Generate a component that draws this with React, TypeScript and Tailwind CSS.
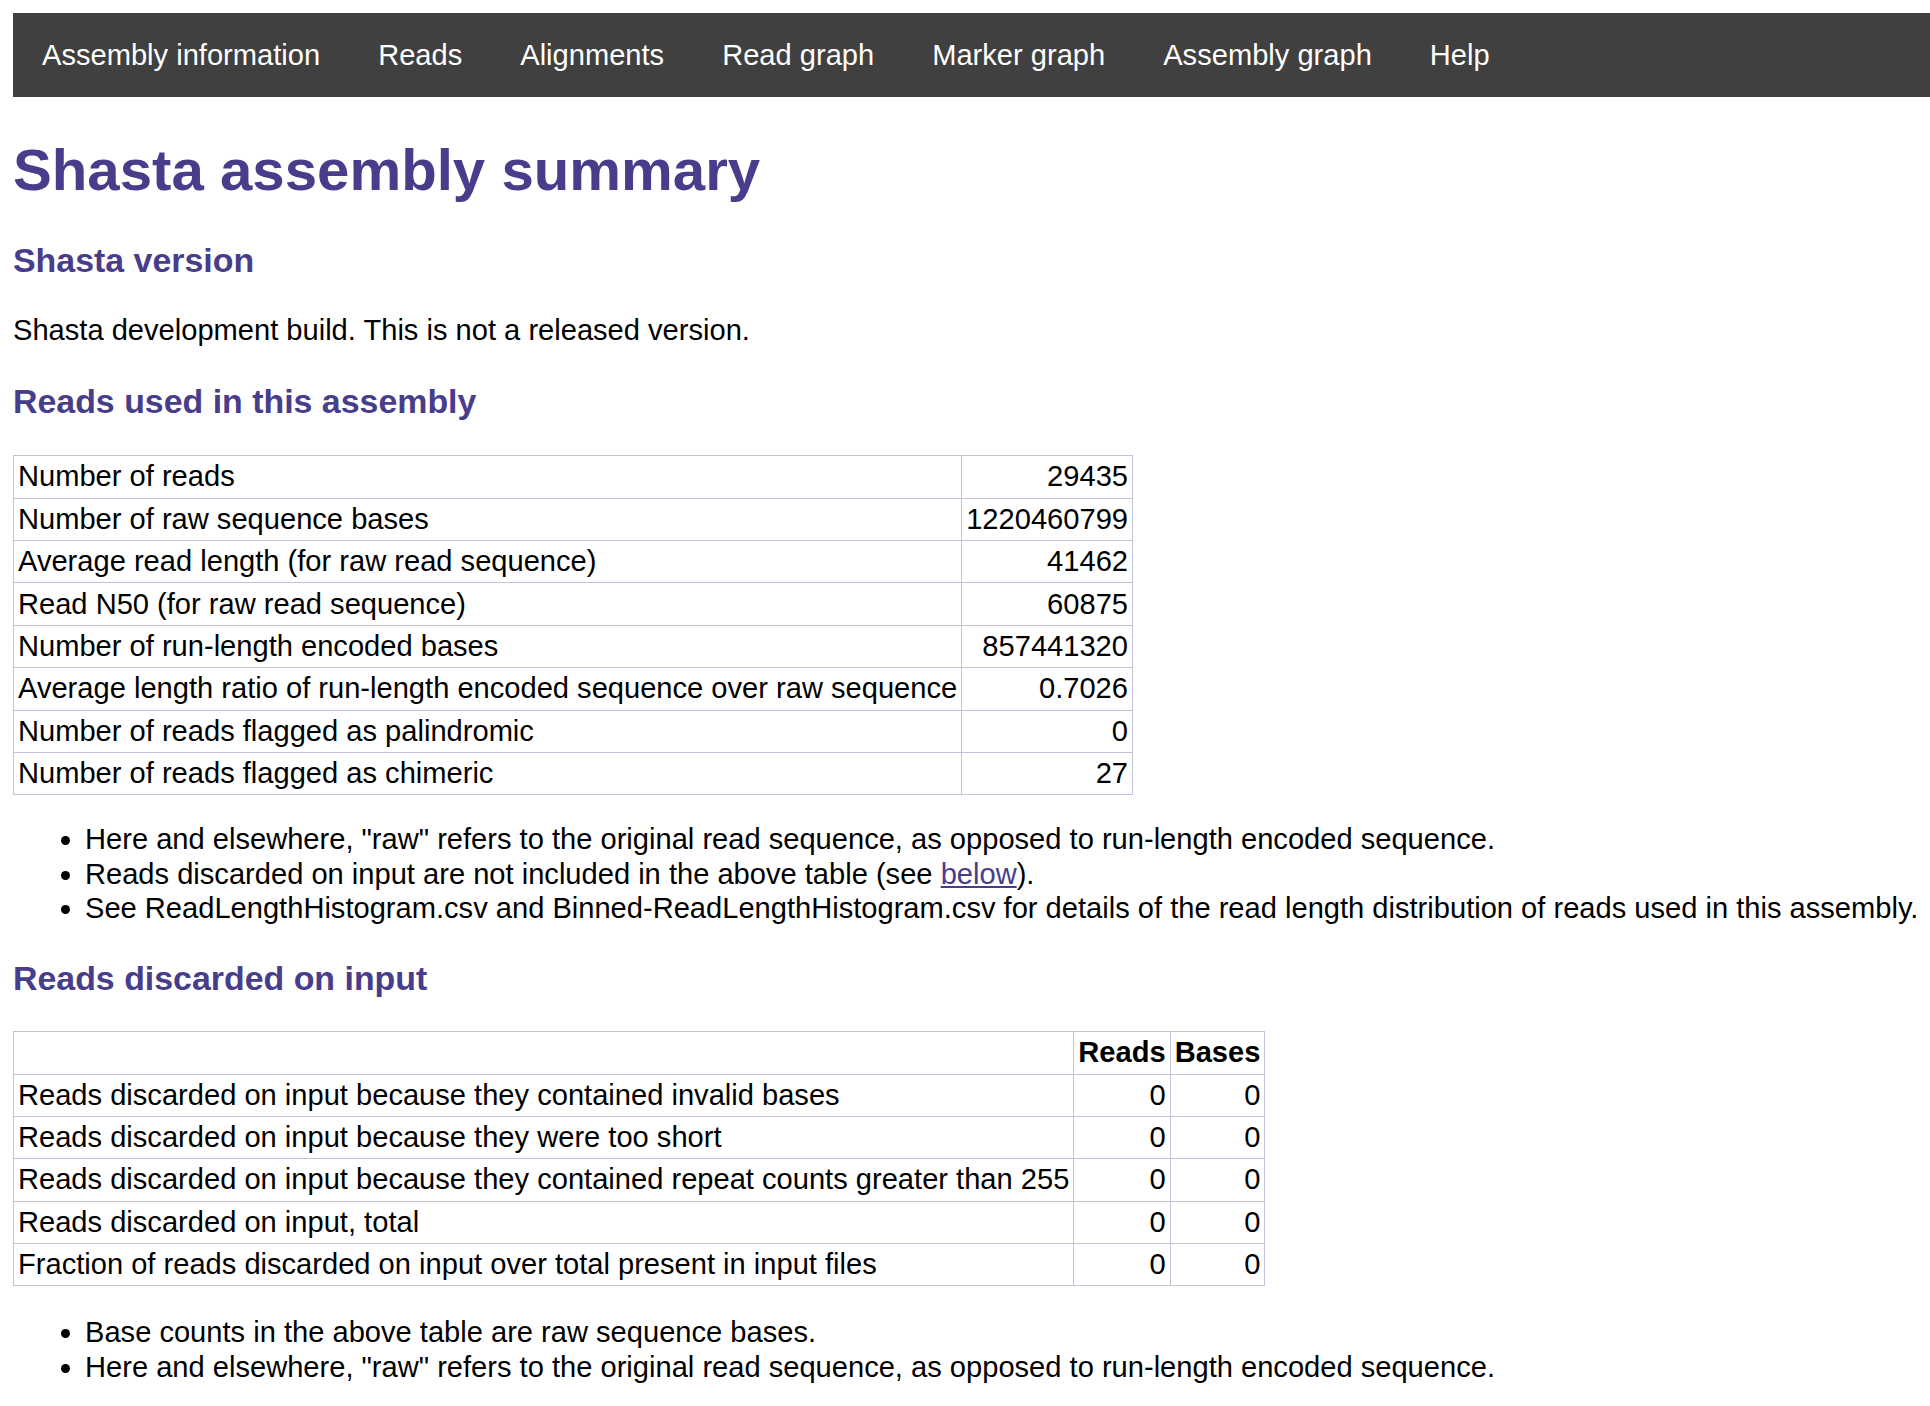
import React from "react";

const navItems = [
  "Assembly information",
  "Reads",
  "Alignments",
  "Read graph",
  "Marker graph",
  "Assembly graph",
  "Help",
];

const readsUsed: [string, string][] = [
  ["Number of reads", "29435"],
  ["Number of raw sequence bases", "1220460799"],
  ["Average read length (for raw read sequence)", "41462"],
  ["Read N50 (for raw read sequence)", "60875"],
  ["Number of run-length encoded bases", "857441320"],
  ["Average length ratio of run-length encoded sequence over raw sequence", "0.7026"],
  ["Number of reads flagged as palindromic", "0"],
  ["Number of reads flagged as chimeric", "27"],
];

const discarded: [string, string, string][] = [
  ["Reads discarded on input because they contained invalid bases", "0", "0"],
  ["Reads discarded on input because they were too short", "0", "0"],
  ["Reads discarded on input because they contained repeat counts greater than 255", "0", "0"],
  ["Reads discarded on input, total", "0", "0"],
  ["Fraction of reads discarded on input over total present in input files", "0", "0"],
];

const cell = "border border-[#c4c2d6] px-[4px] py-[4.2px] leading-[33px]";

function App() {
  return (
    <div className="min-h-screen bg-white pl-[13px] pt-[13px] pb-10 text-black text-[29.1px] font-['Liberation_Sans',Arial,sans-serif]">
      {/* top navigation */}
      <nav className="flex items-center h-[84px] bg-[#404040]">
        {navItems.map((item) => (
          <a key={item} className="px-[29px] leading-[33px] text-white whitespace-nowrap cursor-pointer">
            {item}
          </a>
        ))}
      </nav>

      <h1 className="mt-[38.6px] mb-[38.4px] text-[58.2px] leading-[67px] font-bold text-[#483d8b]">
        Shasta assembly summary
      </h1>

      <h3 className="text-[33.9px] leading-[39px] font-bold text-[#483d8b]">Shasta version</h3>
      <p className="mt-[34.4px] leading-[33px]">
        Shasta development build. This is not a released version.
      </p>

      {/* reads used */}
      <h3 className="mt-[34.6px] text-[33.9px] leading-[39px] font-bold text-[#483d8b]">
        Reads used in this assembly
      </h3>
      <table className="mt-[34.3px]">
        <tbody>
          {readsUsed.map(([label, value]) => (
            <tr key={label}>
              <td className={cell + " whitespace-nowrap"}>{label}</td>
              <td className={cell + " text-right"}>{value}</td>
            </tr>
          ))}
        </tbody>
      </table>
      <ul className="mt-[27.1px] list-disc pl-[72px] leading-[34.5px]">
        <li className="whitespace-nowrap">
          Here and elsewhere, "raw" refers to the original read sequence, as opposed to run-length encoded sequence.
        </li>
        <li className="whitespace-nowrap">
          Reads discarded on input are not included in the above table (see{" "}
          <a className="text-[#483d8b] underline cursor-pointer">below</a>).
        </li>
        <li className="whitespace-nowrap">
          See ReadLengthHistogram.csv and Binned-ReadLengthHistogram.csv for details of the read length distribution of reads used in this assembly.
        </li>
      </ul>

      {/* reads discarded */}
      <h3 className="mt-[32.8px] text-[33.9px] leading-[39px] font-bold text-[#483d8b]">
        Reads discarded on input
      </h3>
      <table className="mt-[33.5px]">
        <tbody>
          <tr>
            <td className={cell}></td>
            <th className={cell + " font-bold"}>Reads</th>
            <th className={cell + " font-bold"}>Bases</th>
          </tr>
          {discarded.map(([label, reads, bases]) => (
            <tr key={label}>
              <td className={cell + " whitespace-nowrap"}>{label}</td>
              <td className={cell + " text-right"}>{reads}</td>
              <td className={cell + " text-right"}>{bases}</td>
            </tr>
          ))}
        </tbody>
      </table>
      <ul className="mt-[28.8px] list-disc pl-[72px] leading-[34.5px]">
        <li className="whitespace-nowrap">Base counts in the above table are raw sequence bases.</li>
        <li className="whitespace-nowrap">
          Here and elsewhere, "raw" refers to the original read sequence, as opposed to run-length encoded sequence.
        </li>
      </ul>
    </div>
  );
}

export default App;
